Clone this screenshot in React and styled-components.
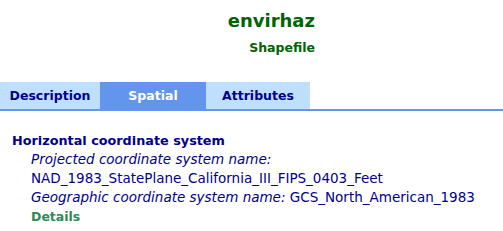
import styled, { createGlobalStyle } from 'styled-components'

const GlobalStyle = createGlobalStyle`
  html, body {
    margin: 0;
    padding: 0;
    background: #fff;
  }
  body {
    font-family: Verdana, "DejaVu Sans", sans-serif;
  }
`

const tabs = [
  { label: 'Description', width: 100 },
  { label: 'Spatial', width: 106, active: true },
  { label: 'Attributes', width: 104 },
]

export default function App() {
  return (
    <Page>
      <GlobalStyle />
      <Header>
        <Title>envirhaz</Title>
        <Subtitle>Shapefile</Subtitle>
      </Header>
      <TabBar>
        {tabs.map((t) => (
          <Tab key={t.label} $width={t.width} $active={t.active}>
            {t.label}
          </Tab>
        ))}
      </TabBar>
      <Body>
        <Heading>Horizontal coordinate system</Heading>
        <Block>
          <Line>
            <Label>Projected coordinate system name:</Label>
          </Line>
          <Line>NAD_1983_StatePlane_California_III_FIPS_0403_Feet</Line>
          <Line>
            <Label>Geographic coordinate system name:</Label> GCS_North_American_1983
          </Line>
          <Details>Details</Details>
        </Block>
      </Body>
    </Page>
  )
}

const Page = styled.div`
  width: 503px;
  height: 231px;
  overflow: hidden;
`

const Header = styled.div`
  display: flex;
  flex-direction: column;
  align-items: flex-end;
  padding: 10px 188px 0 0;
  height: 72px;
  box-sizing: border-box;
`

const Title = styled.div`
  font-size: 18px;
  font-weight: bold;
  color: #006400;
  line-height: 22px;
`

const Subtitle = styled.div`
  font-size: 12.5px;
  font-weight: bold;
  color: #006400;
  line-height: 16px;
  margin-top: 8px;
`

const TabBar = styled.div`
  display: flex;
  margin-top: 10px;
  border-bottom: 2px solid #6495ed;
`

const Tab = styled.div`
  width: ${(p) => p.$width}px;
  height: 27px;
  display: flex;
  align-items: center;
  justify-content: center;
  font-size: 12.5px;
  font-weight: bold;
  color: ${(p) => (p.$active ? '#fff' : '#00008b')};
  background: ${(p) => (p.$active ? '#6495ed' : '#bfdfff')};
`

const Body = styled.div`
  padding: 20px 0 0 12px;
`

const Heading = styled.div`
  font-size: 12.8px;
  font-weight: bold;
  color: #00008b;
  line-height: 19px;
`

const Block = styled.div`
  padding-left: 19px;
`

const Line = styled.div`
  font-size: 13.5px;
  color: #00008b;
  line-height: 19px;
`

const Label = styled.span`
  font-style: italic;
`

const Details = styled.div`
  font-size: 12.5px;
  font-weight: bold;
  color: #2e8b57;
  line-height: 19px;
`
